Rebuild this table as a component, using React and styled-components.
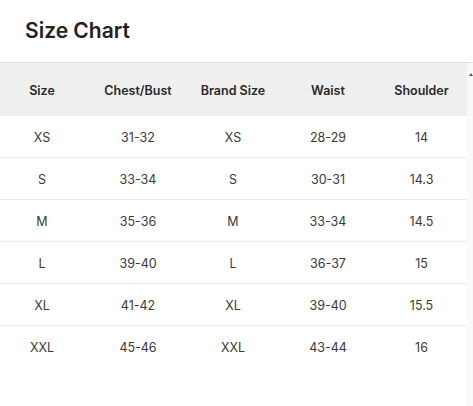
import React from "react";
import styled, { createGlobalStyle } from "styled-components";

const Global = createGlobalStyle`
  html, body { margin: 0; padding: 0; background: #fff; }
  body { font-family: Inter, "Noto Sans", sans-serif; -webkit-font-smoothing: antialiased; }
`;

const Page = styled.div`
  width: 473px;
  height: 406px;
  background: #fff;
  display: flex;
  flex-direction: column;
  overflow: hidden;
`;

const Header = styled.div`
  height: 63px;
  box-sizing: border-box;
  padding: 18px 0 0 25px;
  border-bottom: 1px solid #e2e2e2;
`;

const Title = styled.h2`
  margin: 0;
  font-size: 21px;
  line-height: 26px;
  font-weight: 600;
  color: #222;
  letter-spacing: 0;
`;

const Body = styled.div`
  flex: 1;
  display: flex;
`;

const Table = styled.div`
  width: 467px;
  display: flex;
  flex-direction: column;
`;

const Row = styled.div`
  display: grid;
  grid-template-columns: 84px 108px 82px 108px 79px;
  height: ${(p) => (p.$head ? "53px" : "42px")};
  background: ${(p) => (p.$head ? "#efefef" : "#fff")};
  border-bottom: ${(p) => (p.$last || p.$head ? "none" : "1px solid #ececec")};
  box-sizing: border-box;
  padding-top: ${(p) => (p.$head ? "1px" : "1px")};
`;

const Cell = styled.div`
  display: flex;
  align-items: center;
  justify-content: center;
  font-size: 12.5px;
  font-weight: ${(p) => (p.$head ? 600 : 400)};
  color: ${(p) => (p.$head ? "#2a2a2a" : "#3a3a3a")};
  white-space: nowrap;
`;

const Scrollbar = styled.div`
  width: 6px;
  background: #fafafa;
  position: relative;
`;

const Arrow = styled.div`
  position: absolute;
  top: 10px;
  right: 0;
  width: 0;
  height: 0;
  border-left: 2px solid transparent;
  border-right: 2px solid transparent;
  border-bottom: 3px solid #555;
`;

const head = ["Size", "Chest/Bust", "Brand Size", "Waist", "Shoulder"];
const rows = [
  ["XS", "31-32", "XS", "28-29", "14"],
  ["S", "33-34", "S", "30-31", "14.3"],
  ["M", "35-36", "M", "33-34", "14.5"],
  ["L", "39-40", "L", "36-37", "15"],
  ["XL", "41-42", "XL", "39-40", "15.5"],
  ["XXL", "45-46", "XXL", "43-44", "16"],
];

export default function App() {
  return (
    <Page>
      <Global />
      <Header>
        <Title>Size Chart</Title>
      </Header>
      <Body>
        <Table>
          <Row $head>
            {head.map((h) => (
              <Cell $head key={h}>{h}</Cell>
            ))}
          </Row>
          {rows.map((r, i) => (
            <Row key={i} $last={i === rows.length - 1}>
              {r.map((c, j) => (
                <Cell key={j}>{c}</Cell>
              ))}
            </Row>
          ))}
        </Table>
        <Scrollbar>
          <Arrow />
        </Scrollbar>
      </Body>
    </Page>
  );
}
